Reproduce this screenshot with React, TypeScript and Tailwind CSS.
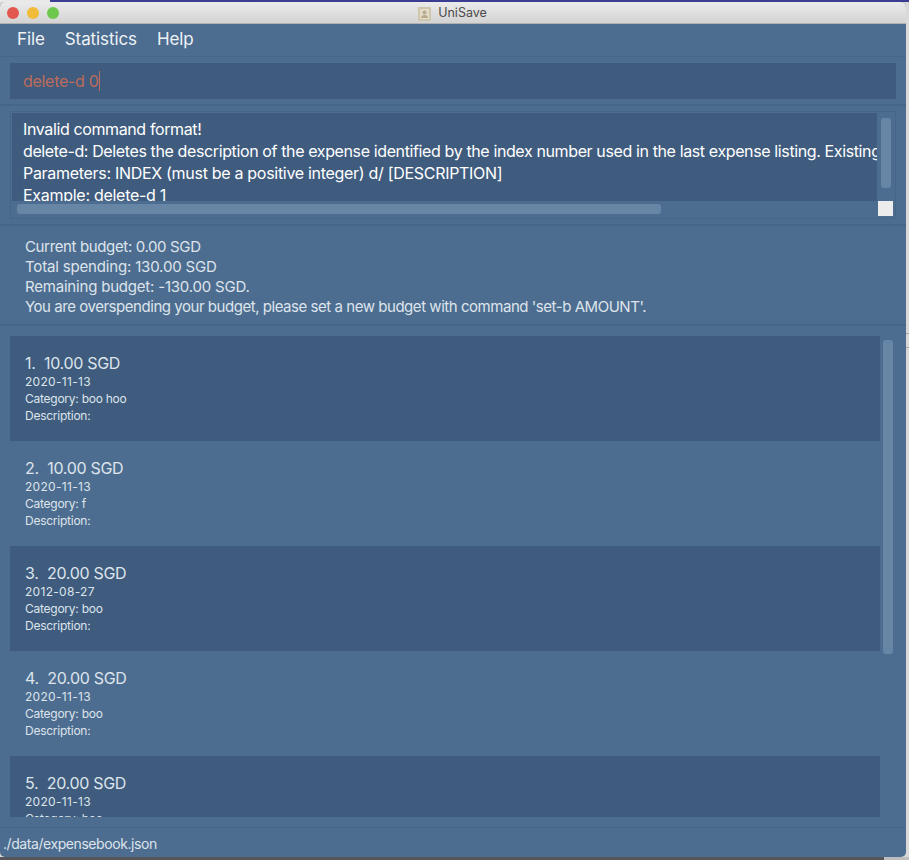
const expenses = [
  { id: 1, amount: "10.00 SGD", date: "2020-11-13", category: "boo hoo" },
  { id: 2, amount: "10.00 SGD", date: "2020-11-13", category: "f" },
  { id: 3, amount: "20.00 SGD", date: "2012-08-27", category: "boo" },
  { id: 4, amount: "20.00 SGD", date: "2020-11-13", category: "boo" },
  { id: 5, amount: "20.00 SGD", date: "2020-11-13", category: "boo" },
];

const App = () => {
  return (
    <div className="flex h-[860px] w-[909px] flex-col overflow-hidden bg-[#d9d9d9] font-['Inter','Liberation_Sans',sans-serif]">
      <div className="flex h-[2px] shrink-0">
        <div className="w-[50px] bg-[#e8e8e8]" />
        <div className="flex-1 bg-[#3b3d92]" />
      </div>

      <div className="flex h-[855px] shrink-0">
        <div className="flex h-full w-[906px] flex-col overflow-hidden rounded-[5px] bg-[#4d6d90]">
          {/* title bar */}
          <div className="relative flex h-[22px] shrink-0 items-center justify-center border-b border-[#b0b0b0] bg-gradient-to-b from-[#ebebeb] to-[#d3d3d3] pt-[2px]">
            <div className="absolute left-[7px] top-[5px] flex gap-2">
              <span className="h-3 w-3 rounded-full bg-[#e2574f]" />
              <span className="h-3 w-3 rounded-full bg-[#f1bc3a]" />
              <span className="h-3 w-3 rounded-full bg-[#6cc84c]" />
            </div>
            <span className="ml-[-1px] flex items-center gap-[7px] text-[12.5px] text-[#4a4a4a]">
              <svg width="13" height="14" viewBox="0 0 13 14">
                <rect x="0" y="0" width="13" height="14" rx="1" fill="#cfc6ae" />
                <rect x="2" y="2" width="9" height="10" fill="#e4dcc8" />
                <circle cx="6.5" cy="5.5" r="2" fill="#b5a98e" />
                <path d="M3 11c0-2 1.5-3 3.5-3s3.5 1 3.5 3z" fill="#b5a98e" />
              </svg>
              UniSave
            </span>
          </div>

          {/* menu */}
          <div className="flex h-[33px] shrink-0 items-center gap-5 border-b border-[#466587] pl-[17px] text-[17px] tracking-[-0.1px] text-[#eef2f6]">
            <span>File</span>
            <span>Statistics</span>
            <span>Help</span>
          </div>

          {/* command box */}
          <div className="shrink-0 border-b-2 border-[#466587] px-[10px] pb-[5px] pt-[6px]">
            <div className="flex h-9 items-center bg-[#3f5c7e] pl-[13px] text-[16px] tracking-[-0.3px] text-[#bd6b5a]">
              delete-d 0<span className="h-5 w-px bg-[#bd6b5a]" />
            </div>
          </div>

          {/* result box */}
          <div className="shrink-0 border-b-2 border-[#466587] px-[10px] pb-[5px] pt-[5px]">
            <div className="relative h-[108px] overflow-hidden border border-[#466587] p-px">
              <div className="h-[88px] w-[865px] overflow-hidden whitespace-nowrap bg-[#3f5c7e] pl-[11px] pt-[5px] text-[16px] leading-[22px] text-white">
                <div className="tracking-[-0.38px]">Invalid command format!</div>
                <div className="tracking-[-0.38px]">delete-d: Deletes the description of the expense identified by the index number used in the last expense listing. Existing description will be overwritten</div>
                <div className="tracking-[-0.3px]">Parameters: INDEX (must be a positive integer) d/ [DESCRIPTION]</div>
                <div className="tracking-[-0.28px]">Example: delete-d 1</div>
              </div>
              <div className="absolute bottom-[4px] left-[6px] h-[10px] w-[644px] rounded-[3px] bg-[#6786a6]" />
              <div className="absolute right-[4px] top-[6px] h-[70px] w-[10px] rounded-[3px] bg-[#6786a6]" />
              <div className="absolute bottom-[2px] right-[2px] h-[15px] w-[15px] bg-[#ececec]" />
            </div>
          </div>

          {/* budget */}
          <div className="h-[100px] shrink-0 border-b-2 border-[#466587] pl-[25px] pt-[11px] text-[15px] leading-5 text-[#dde4eb]">
            <div className="tracking-[-0.36px]">Current budget: 0.00 SGD</div>
            <div className="tracking-[-0.17px]">Total spending: 130.00 SGD</div>
            <div className="tracking-[-0.2px]">Remaining budget: -130.00 SGD.</div>
            <div className="tracking-[-0.46px]">You are overspending your budget, please set a new budget with command 'set-b AMOUNT'.</div>
          </div>

          {/* expense list */}
          <div className="relative min-h-0 flex-1 pb-[10px] pl-[10px] pt-[10px]">
            <div className="h-full overflow-hidden">
              {expenses.map((e) => (
                <div
                  key={e.id}
                  className={`h-[105px] w-[870px] pl-[15px] pt-[17px] text-[#dde4eb] ${e.id % 2 === 1 ? "bg-[#3f5c7e]" : ""}`}
                >
                  <div className="text-[16px] leading-5 tracking-[-0.3px]">{e.id}.&nbsp;&nbsp;{e.amount}</div>
                  <div className="text-[12px] leading-[17px] tracking-[0.3px]">{e.date}</div>
                  <div className="text-[12px] leading-[17px] tracking-[-0.25px]">Category: {e.category}</div>
                  <div className="text-[12px] leading-[17px] tracking-[-0.25px]">Description:</div>
                </div>
              ))}
            </div>
            <div className="absolute right-[13px] top-[14px] h-[314px] w-[10px] rounded-[3px] bg-[#6786a6]" />
          </div>

          {/* status bar */}
          <div className="flex h-[30px] shrink-0 items-center border-t border-[#466587] pl-[3px] pt-[2px] text-[14px] tracking-[-0.43px] text-[#dde4eb]">
            ./data/expensebook.json
          </div>
        </div>

        {/* desktop showing at the right of the window */}
        <div className="flex-1">
          <div className="mt-[331px] h-px bg-[#a8a8a8]" />
          <div className="mt-[13px] h-px bg-[#a8a8a8]" />
        </div>
      </div>

      <div className="flex min-h-0 flex-1">
        <div className="w-[884px] bg-[#55555a]" />
        <div className="flex-1 bg-[#bdbdbd]" />
      </div>
    </div>
  );
};

export default App;
